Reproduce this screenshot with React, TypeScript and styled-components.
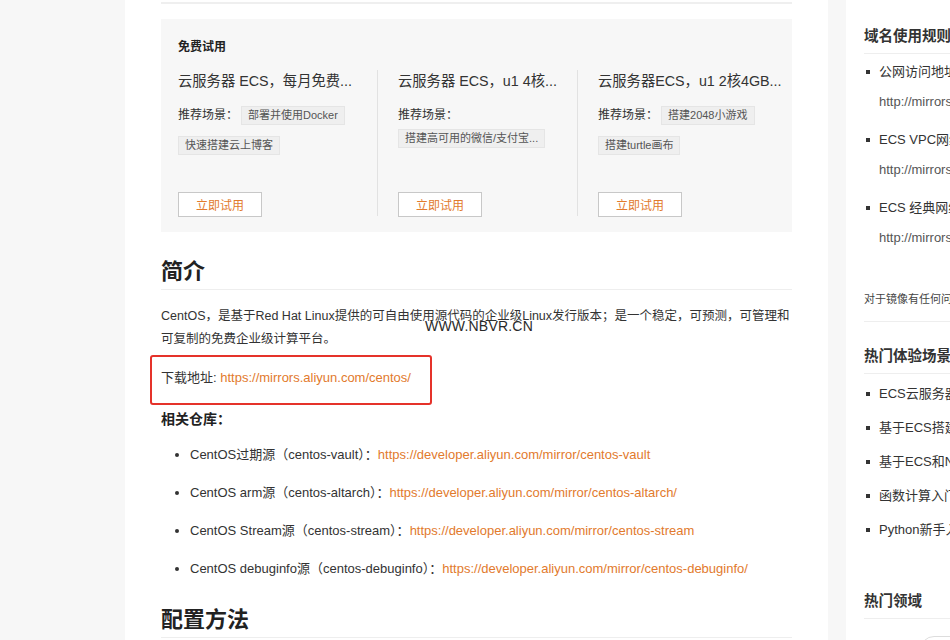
import React from "react";
import styled, { createGlobalStyle } from "styled-components";

const GlobalStyle = createGlobalStyle`
  html, body {
    margin: 0;
    padding: 0;
    overflow: hidden;
    background: #f7f7f7;
  }
  body {
    font-family: "Liberation Sans", "Noto Sans CJK SC", sans-serif;
    color: #333;
  }
  * {
    box-sizing: border-box;
  }
`;

const ORANGE = "#e27a2d";

const Page = styled.div`
  display: flex;
  gap: 18px;
  padding-left: 125px;
  height: 640px;
`;

const Main = styled.main`
  position: relative;
  flex: 0 0 703px;
  min-width: 0;
  background: #fff;
  padding: 2px 36px 0;
`;

const TopRule = styled.div`
  height: 2px;
  background: #efefef;
`;

const TrialBox = styled.section`
  margin-top: 15px;
  background: #f7f7f7;
  padding: 20px 17px 16px;
`;

const BoxTitle = styled.div`
  font-size: 12px;
  font-weight: 700;
  line-height: 16px;
  color: #222;
`;

const Columns = styled.div`
  display: grid;
  grid-template-columns: 199px 200px minmax(0, 1fr);
  height: 146px;
  margin-top: 15px;
`;

const Column = styled.div`
  display: flex;
  flex-direction: column;
  align-items: flex-start;
  min-width: 0;

  & + & {
    border-left: 1px solid #e2e2e2;
    padding-left: 20px;
  }
`;

const CardTitle = styled.div`
  font-size: 14.3px;
  line-height: 23px;
  color: #333;
  white-space: nowrap;
`;

const Scene = styled.div<{ $rowGap: number }>`
  display: flex;
  flex-wrap: wrap;
  align-items: center;
  column-gap: 3px;
  row-gap: ${({ $rowGap }) => $rowGap}px;
  margin-top: 13px;
`;

const SceneLabel = styled.span`
  font-size: 12px;
  line-height: 19px;
  color: #333;
`;

const Tag = styled.span`
  font-size: 11px;
  line-height: 17px;
  padding: 0 6px;
  background: #efefef;
  border: 1px solid #e5e5e5;
  color: #555;
  white-space: nowrap;
`;

const TryButton = styled.button`
  margin-top: auto;
  margin-bottom: -1px;
  width: 84px;
  height: 25px;
  border: 1px solid #c8c8c8;
  background: #fff;
  color: ${ORANGE};
  font-family: inherit;
  font-size: 12px;
  padding: 0;
`;

const SectionTitle = styled.h2`
  margin: 23px 0 0;
  padding-bottom: 6px;
  border-bottom: 1px solid #eee;
  font-family: "Noto Sans CJK SC", sans-serif;
  font-size: 22px;
  line-height: 28px;
  font-weight: 700;
  color: #222;
`;

const Para = styled.p`
  margin: 15px 0 0;
  font-size: 12.5px;
  line-height: 23px;
  color: #333;
  white-space: nowrap;
`;

const Link = styled.a`
  color: ${ORANGE};
  text-decoration: none;
`;

const Highlighted = styled.div`
  position: relative;
  margin-top: 15px;
  font-size: 13px;
  line-height: 23px;
`;

const Annotation = styled.div`
  position: absolute;
  left: -11px;
  top: -11px;
  width: 282px;
  height: 50px;
  border: 2px solid #e5322a;
  border-radius: 3px;
`;

const SubTitle = styled.h3`
  margin: 18px 0 0;
  font-family: "Noto Sans CJK SC", sans-serif;
  font-size: 14px;
  line-height: 22px;
  font-weight: 700;
  color: #222;
`;

const RepoList = styled.ul`
  margin: 14px 0 0;
  padding: 0 0 0 29px;
  list-style: disc;
`;

const RepoItem = styled.li`
  font-size: 13px;
  line-height: 23px;
  margin-bottom: 15px;
  color: #333;
`;

const Watermark = styled.div`
  position: absolute;
  left: 300px;
  top: 318px;
  font-size: 14px;
  letter-spacing: 0.2px;
  color: #2a2a2a;
`;

const Sidebar = styled.aside`
  flex: 0 0 320px;
  background: #fff;
  padding-left: 18px;
  white-space: nowrap;
`;

const SideHeading = styled.div<{ $top: number }>`
  padding: ${({ $top }) => $top}px 0 7px;
  border-bottom: 1px solid #eee;
  font-family: "Noto Sans CJK SC", sans-serif;
  font-size: 14.5px;
  line-height: 22px;
  font-weight: 700;
  color: #333;
`;

const SideList = styled.ul<{ $bottom: number }>`
  list-style: none;
  margin: 0;
  padding: 3px 0 ${({ $bottom }) => $bottom}px;
`;

const SideItem = styled.li<{ $line: number; $gap: number }>`
  position: relative;
  padding-left: 15px;
  font-size: 13px;
  line-height: ${({ $line }) => $line}px;
  margin-bottom: ${({ $gap }) => $gap}px;
  color: #333;

  &::before {
    content: "";
    position: absolute;
    left: 2px;
    top: ${({ $line }) => $line / 2 - 2}px;
    width: 4px;
    height: 4px;
    background: #333;
  }
`;

const SideUrl = styled.div`
  color: #555;
`;

const SideNote = styled.div`
  padding: 16px 0 12px;
  border-bottom: 1px solid #eee;
  font-size: 11px;
  line-height: 20px;
  color: #444;
`;

const Pill = styled.div`
  margin: 17px 0 0 56px;
  width: 110px;
  height: 28px;
  border: 1px solid #ddd;
  border-radius: 14px;
`;

const trials = [
  {
    title: "云服务器 ECS，每月免费...",
    tags: ["部署并使用Docker", "快速搭建云上博客"],
    rowGap: 11,
  },
  {
    title: "云服务器 ECS，u1 4核...",
    tags: ["搭建高可用的微信/支付宝..."],
    rowGap: 4,
  },
  {
    title: "云服务器ECS，u1 2核4GB...",
    tags: ["搭建2048小游戏", "搭建turtle画布"],
    rowGap: 11,
  },
];

const repos = [
  ["CentOS过期源（centos-vault）：", "https://developer.aliyun.com/mirror/centos-vault"],
  ["CentOS arm源（centos-altarch）：", "https://developer.aliyun.com/mirror/centos-altarch/"],
  ["CentOS Stream源（centos-stream）：", "https://developer.aliyun.com/mirror/centos-stream"],
  ["CentOS debuginfo源（centos-debuginfo）：", "https://developer.aliyun.com/mirror/centos-debuginfo/"],
];

const domains = [
  ["公网访问地址：", "http://mirrors.aliyun.com/"],
  ["ECS VPC网络访问地址：", "http://mirrors.cloud.aliyuncs.com/"],
  ["ECS 经典网络访问地址：", "http://mirrors.aliyuncs.com/"],
];

const scenes = [
  "ECS云服务器新手上路",
  "基于ECS搭建云上博客",
  "基于ECS和NAS搭建个人网盘",
  "函数计算入门",
  "Python新手入门",
];

export default function App() {
  return (
    <>
      <GlobalStyle />
      <Page>
        <Main>
          <TopRule />
          <TrialBox>
            <BoxTitle>免费试用</BoxTitle>
            <Columns>
              {trials.map((t) => (
                <Column key={t.title}>
                  <CardTitle>{t.title}</CardTitle>
                  <Scene $rowGap={t.rowGap}>
                    <SceneLabel>推荐场景：</SceneLabel>
                    {t.tags.map((tag) => (
                      <Tag key={tag}>{tag}</Tag>
                    ))}
                  </Scene>
                  <TryButton>立即试用</TryButton>
                </Column>
              ))}
            </Columns>
          </TrialBox>

          <SectionTitle>简介</SectionTitle>
          <Para>
            CentOS，是基于Red Hat Linux提供的可自由使用源代码的企业级Linux发行版本；是一个稳定，可预测，可管理和
            <br />
            可复制的免费企业级计算平台。
          </Para>

          <Highlighted>
            下载地址: <Link href="#">https://mirrors.aliyun.com/centos/</Link>
            <Annotation />
          </Highlighted>

          <SubTitle>相关仓库：</SubTitle>
          <RepoList>
            {repos.map(([label, url]) => (
              <RepoItem key={url}>
                {label}
                <Link href="#">{url}</Link>
              </RepoItem>
            ))}
          </RepoList>

          <SectionTitle>配置方法</SectionTitle>
          <Watermark>WWW.NBVR.CN</Watermark>
        </Main>

        <Sidebar>
          <SideHeading $top={24}>域名使用规则</SideHeading>
          <SideList $bottom={12}>
            {domains.map(([label, url]) => (
              <SideItem key={label} $line={30} $gap={8}>
                {label}
                <SideUrl>{url}</SideUrl>
              </SideItem>
            ))}
          </SideList>
          <SideNote>对于镜像有任何问题，请联系我们</SideNote>

          <SideHeading $top={22}>热门体验场景</SideHeading>
          <SideList $bottom={0}>
            {scenes.map((s) => (
              <SideItem key={s} $line={34} $gap={0}>
                {s}
              </SideItem>
            ))}
          </SideList>

          <SideHeading $top={42}>热门领域</SideHeading>
          <Pill />
        </Sidebar>
      </Page>
    </>
  );
}
